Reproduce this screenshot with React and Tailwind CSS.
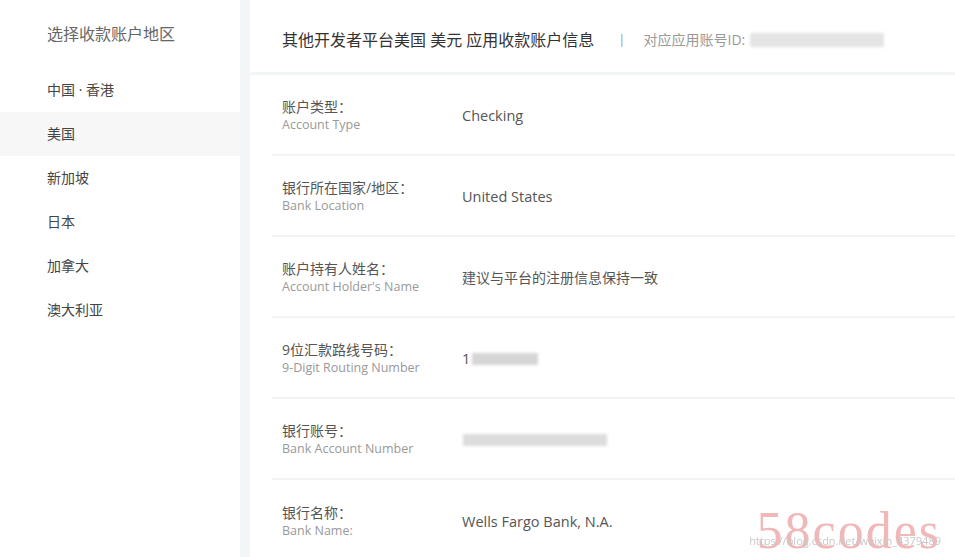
const regions = ["中国 · 香港", "美国", "新加坡", "日本", "加拿大", "澳大利亚"];

const rows = [
  { zh: "账户类型：", en: "Account Type", value: "Checking" },
  { zh: "银行所在国家/地区：", en: "Bank Location", value: "United States" },
  { zh: "账户持有人姓名：", en: "Account Holder's Name", value: "建议与平台的注册信息保持一致", small: true },
  { zh: "9位汇款路线号码：", en: "9-Digit Routing Number", routing: true },
  { zh: "银行账号：", en: "Bank Account Number", account: true },
  { zh: "银行名称：", en: "Bank Name:", value: "Wells Fargo Bank, N.A." },
];

const Blur = ({ className }) => (
  <div className={`bg-[#d6d6d6] blur-[1.5px] ${className}`} />
);

export default function App() {
  return (
    <div
      className="flex h-[557px] w-[955px] overflow-hidden bg-[#f3f6f6] text-[#555]"
      style={{ fontFamily: '"Open Sans", "Noto Sans CJK SC", sans-serif' }}
    >
      {/* Sidebar */}
      <aside className="w-[240px] shrink-0 bg-white">
        <div className="pl-[47px] pt-[22px] pb-[22px] text-[16px] text-[#666]">选择收款账户地区</div>
        <ul>
          {regions.map((r, i) => (
            <li
              key={r}
              className={`h-[44px] pl-[47px] text-[14px] leading-[44px] text-[#444] ${
                i === 1 ? "bg-[#f7f7f7]" : ""
              }`}
            >
              {r}
            </li>
          ))}
        </ul>
      </aside>

      {/* Main */}
      <main className="ml-[10px] flex flex-1 flex-col gap-[3px]">
        <header className="flex h-[72px] shrink-0 items-center bg-white pl-[32px] pt-[7px]">
          <span className="text-[16px] text-[#333]">其他开发者平台美国 美元 应用收款账户信息</span>
          <span className="ml-[24px] text-[13px] text-[#999]">|</span>
          <span className="ml-[18px] text-[14px] text-[#999]">对应应用账号ID:</span>
          <Blur className="ml-[5px] h-[14px] w-[134px] bg-[#e4e4e4]" />
        </header>

        <section className="relative flex-1 bg-white pl-[22px]">
          {rows.map((row, i) => (
            <div
              key={row.zh}
              className={`flex h-[81px] items-center pt-[2px] ${i < rows.length - 1 ? "border-b-2 border-[#f3f3f3]" : ""}`}
            >
              <div className="w-[190px] pl-[10px]">
                <div className="text-[14px] leading-[18px] text-[#555]">{row.zh}</div>
                <div className="text-[12.5px] leading-[18px] text-[#999]">{row.en}</div>
              </div>
              <div className="text-[14.5px] text-[#555]">
                {row.value && <span className={row.small ? "text-[14px]" : ""}>{row.value}</span>}
                {row.routing && (
                  <div className="flex items-center">
                    <span>1</span>
                    <Blur className="ml-[2px] h-[12px] w-[66px]" />
                  </div>
                )}
                {row.account && <Blur className="ml-[1px] h-[12px] w-[144px] bg-[#dcdcdc]" />}
              </div>
            </div>
          ))}

          {/* watermark */}
          <div className="pointer-events-none absolute bottom-[4px] right-[14px] flex items-end">
            <span
              className="text-[52px] leading-none tracking-[2px] text-[#f0b8b8]"
              style={{ fontFamily: '"Liberation Serif", serif' }}
            >
              58codes
            </span>
            <span className="absolute bottom-[8px] right-[0px] whitespace-nowrap text-[11px] text-[#c8c8c8] blur-[0.4px]">
              https://blog.csdn.net/weixin_4379489
            </span>
          </div>
        </section>
      </main>
    </div>
  );
}
